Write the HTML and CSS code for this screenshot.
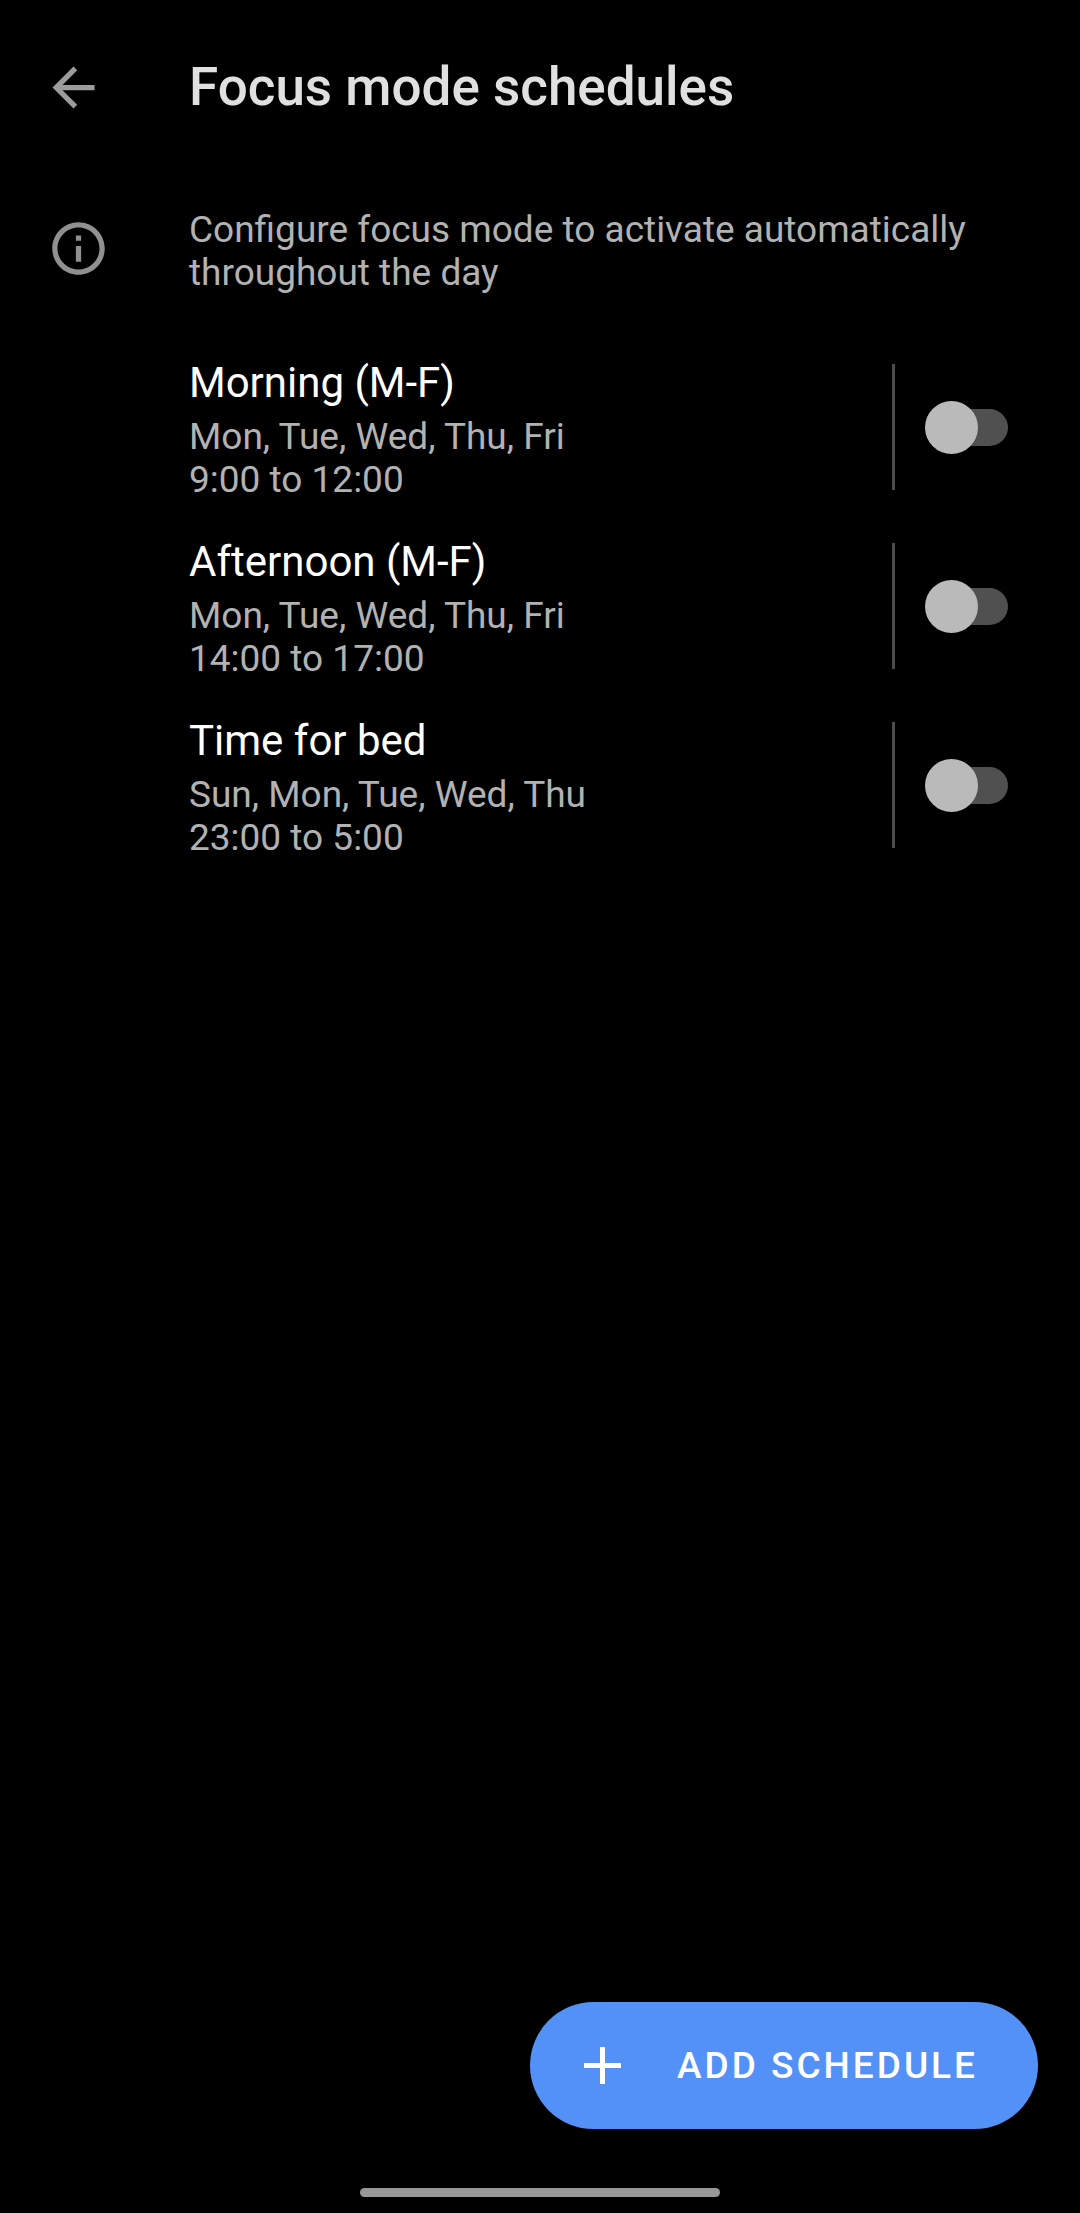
FILE: index.html
```html
<!DOCTYPE html>
<html lang="en">
<head>
<meta charset="utf-8">
<meta name="viewport" content="width=device-width, initial-scale=1">
<title>Focus mode schedules</title>
<link rel="stylesheet" href="styles.css">
</head>
<body>
<header class="app-bar">
  <button class="back" type="button" aria-label="Back">
    <svg class="icon" viewBox="0 0 24 24" aria-hidden="true"><path d="M20 11H7.83l5.59-5.59L12 4l-8 8 8 8 1.41-1.41L7.83 13H20z"/></svg>
  </button>
  <h1 class="title">Focus mode schedules</h1>
</header>
<main class="content">
  <section class="info">
    <svg class="icon" viewBox="0 0 24 24" aria-hidden="true"><path d="M11 7h2v2h-2zm0 4h2v6h-2zm1-9C6.48 2 2 6.48 2 12s4.48 10 10 10 10-4.48 10-10S17.52 2 12 2zm0 18c-4.41 0-8-3.59-8-8s3.59-8 8-8 8 3.59 8 8-3.59 8-8 8z"/></svg>
    <p class="info-text">Configure focus mode to activate automatically throughout the day</p>
  </section>
  <ul class="schedules">
    <li class="schedule">
      <label class="details" for="morning">
        <span class="name">Morning (M-F)</span>
        <span class="meta">Mon, Tue, Wed, Thu, Fri</span>
        <span class="meta">9:00 to 12:00</span>
      </label>
      <div class="control"><input class="switch" type="checkbox" role="switch" id="morning"></div>
    </li>
    <li class="schedule">
      <label class="details" for="afternoon">
        <span class="name">Afternoon (M-F)</span>
        <span class="meta">Mon, Tue, Wed, Thu, Fri</span>
        <span class="meta">14:00 to 17:00</span>
      </label>
      <div class="control"><input class="switch" type="checkbox" role="switch" id="afternoon"></div>
    </li>
    <li class="schedule">
      <label class="details" for="bedtime">
        <span class="name">Time for bed</span>
        <span class="meta">Sun, Mon, Tue, Wed, Thu</span>
        <span class="meta">23:00 to 5:00</span>
      </label>
      <div class="control"><input class="switch" type="checkbox" role="switch" id="bedtime"></div>
    </li>
  </ul>
</main>
<footer class="bottom">
  <button class="add" type="button">
    <svg class="plus" viewBox="0 0 37 37" aria-hidden="true"><path d="M16 0h5v16h16v5H21v16h-5V21H0v-5h16z"/></svg>
    ADD SCHEDULE
  </button>
  <div class="home-bar"></div>
</footer>
</body>
</html>
```

FILE: styles.css
```css
* {
  box-sizing: border-box;
}

body {
  margin: 0;
  min-height: 100vh;
  display: flex;
  flex-direction: column;
  background: #000;
  color: #b2b2b2;
  font-family: Roboto, "Liberation Sans", sans-serif;
  font-size: 37px;
  line-height: 43px;
}

button {
  border: 0;
  font: inherit;
  cursor: pointer;
}

.icon {
  display: block;
  width: 63px;
  height: 63px;
  fill: #909090;
}

.app-bar {
  display: flex;
  align-items: center;
  height: 174px;
  padding: 0 42px;
}

.back {
  width: 147px;
  padding: 0;
  background: none;
}

.back .icon {
  fill: #9c9c9c;
}

.title {
  margin: 0;
  color: #e0e0e0;
  font-size: 53px;
  font-weight: 500;
  line-height: 62px;
}

.info {
  display: flex;
  align-items: flex-start;
  padding: 34px 72px 35px 47px;
}

.info .icon {
  flex: none;
  margin: 9px 79px 0 0;
}

.info-text {
  margin: 0;
}

.schedules {
  margin: 0;
  padding: 11px 0;
  list-style: none;
}

.schedule {
  display: flex;
  padding: 18px 72px 18px 189px;
}

.details {
  flex: 1;
  display: flex;
  flex-direction: column;
}

.name {
  margin-bottom: 8px;
  color: #fff;
  font-size: 42px;
  line-height: 49px;
}

.control {
  display: flex;
  align-items: center;
  height: 126px;
  margin-top: 6px;
  padding-left: 30px;
  border-left: 3px solid #4c4c4c;
}

/* The thumb is wider than the track's rounded end and overhangs it. */
.switch {
  appearance: none;
  display: flex;
  align-items: center;
  position: relative;
  width: 83px;
  height: 53px;
  margin: 0;
}

.switch::before {
  content: "";
  width: 77px;
  height: 37px;
  margin-left: 6px;
  border-radius: 19px;
  background: #505050;
}

.switch::after {
  content: "";
  position: absolute;
  left: 0;
  top: 0;
  width: 53px;
  height: 53px;
  border-radius: 50%;
  background: #bababa;
}

.switch:checked::after {
  left: 30px;
}

.bottom {
  display: flex;
  flex-direction: column;
  margin-top: auto;
  padding-bottom: 16px;
}

.add {
  align-self: flex-end;
  display: flex;
  align-items: center;
  gap: 56px;
  height: 127px;
  margin: 0 42px 59px;
  padding: 0 60px 0 54px;
  border-radius: 64px;
  background: #5491f7;
  color: #fff;
  font-weight: 500;
  letter-spacing: 3px;
}

.plus {
  width: 37px;
  height: 37px;
  fill: #fff;
}

.home-bar {
  align-self: center;
  width: 33.3333%;
  height: 9px;
  border-radius: 5px;
  background: #989898;
}
```
